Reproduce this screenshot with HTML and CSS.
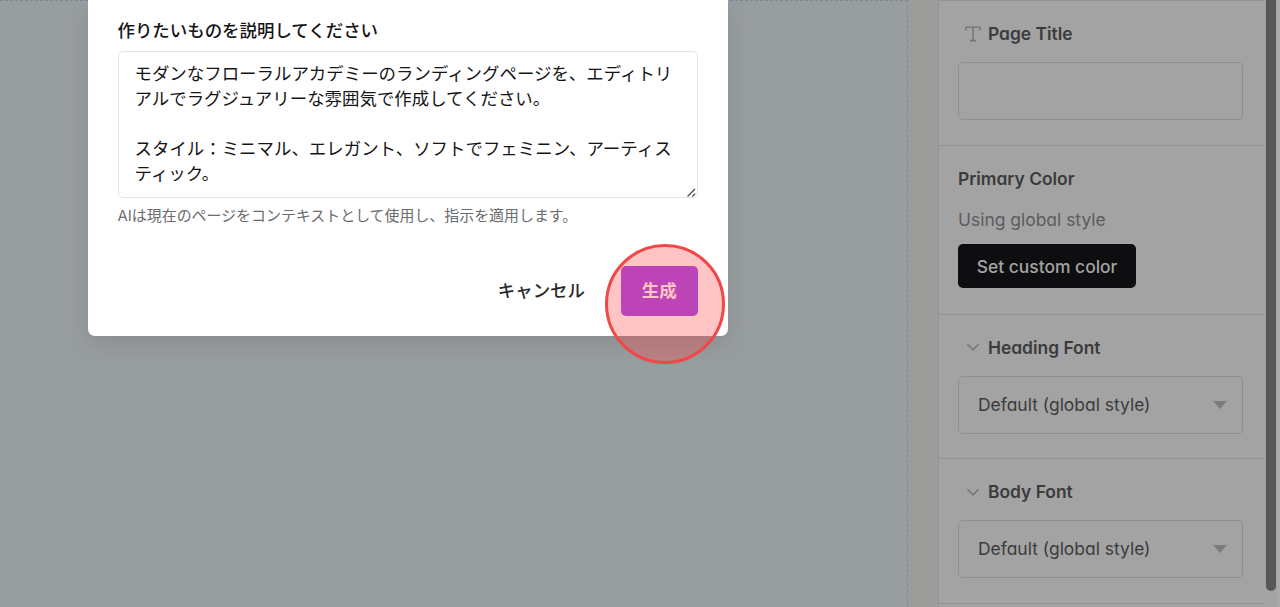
FILE: index.html
```html
<!DOCTYPE html>
<html lang="ja">
<head>
    <meta charset="UTF-8">
    <meta name="viewport" content="width=device-width, initial-scale=1.0">
    <title>Page Editor</title>
    <link rel="stylesheet" href="styles.css">
</head>
<body>
    <div class="editor">
        <main class="canvas"></main>
        <aside class="panel">
            <section class="section">
                <label class="section-title indented" for="pageTitle">
                    <svg class="icon-text" width="16" height="16" viewBox="0 0 16 16" fill="none" stroke="currentColor" stroke-width="1.6">
                        <path d="M1 4.4V1.2h14v3.2M8 1.2v13.4M5 14.6h6"/>
                    </svg>
                    Page Title
                </label>
                <input class="field" type="text" id="pageTitle">
            </section>
            <section class="section section-color">
                <div class="section-title">Primary Color</div>
                <div class="hint">Using global style</div>
                <button class="button-dark" type="button">Set custom color</button>
            </section>
            <section class="section">
                <div class="section-title indented">
                    <svg class="icon-chevron" width="16" height="16" viewBox="0 0 16 16" fill="none" stroke="currentColor" stroke-width="1.6">
                        <path d="M2.4 5.2L8 10.8l5.6-5.6"/>
                    </svg>
                    Heading Font
                </div>
                <div class="field select">Default (global style)<span class="caret"></span></div>
            </section>
            <section class="section">
                <div class="section-title indented">
                    <svg class="icon-chevron" width="16" height="16" viewBox="0 0 16 16" fill="none" stroke="currentColor" stroke-width="1.6">
                        <path d="M2.4 5.2L8 10.8l5.6-5.6"/>
                    </svg>
                    Body Font
                </div>
                <div class="field select">Default (global style)<span class="caret"></span></div>
            </section>
            <div class="panel-end"></div>
        </aside>
        <div class="scrollbar"><div class="thumb"></div></div>
    </div>

    <div class="dialog">
        <label class="label" for="prompt">作りたいものを説明してください</label>
        <div class="prompt-wrap">
            <textarea class="prompt" id="prompt">モダンなフローラルアカデミーのランディングページを、エディトリアルでラグジュアリーな雰囲気で作成してください。

スタイル：ミニマル、エレガント、ソフトでフェミニン、アーティスティック。</textarea>
            <svg class="grip" width="9" height="9" viewBox="0 0 9 9" stroke="#444" stroke-width="1.2">
                <path d="M0.5 8.5l7.5-7.5M5.3 8.5l2.9-2.9"/>
            </svg>
        </div>
        <p class="help">AIは現在のページをコンテキストとして使用し、指示を適用します。</p>
        <div class="actions">
            <button class="button" type="button">キャンセル</button>
            <button class="button button-primary" type="button">生成</button>
        </div>
    </div>
    <div class="click-marker"></div>
</body>
</html>
```

FILE: styles.css
```css
* {
    box-sizing: border-box;
}
body {
    margin: 0;
    height: 607px;
    overflow: hidden;
    background-color: #9c9c9b;
    font-family: Inter, "Noto Sans CJK JP", sans-serif;
    font-size: 17.44px;
    color: #3b3b3d;
}
.editor {
    display: flex;
    height: 607px;
    overflow: hidden;
}
.canvas {
    width: 908px;
    margin-right: 29.5px;
    background-color: #989da0;
    border-top: 1px dashed #7c8694;
    border-right: 1px dashed #8189a0;
}
.panel {
    width: 326.5px;
    background-color: #a3a3a3;
    border-left: 1px solid #959595;
    font-feature-settings: "cv11";
}
.section {
    height: 144.5px;
    padding: 19.5px 21px 0 19.5px;
    border-top: 1px solid #939393;
}
.section-color {
    height: 169px;
}
.panel-end {
    border-top: 1px solid #939393;
}
.section-title {
    display: flex;
    align-items: center;
    height: 26px;
    font-size: 17.4px;
    font-weight: 600;
}
.indented {
    padding-left: 7px;
    gap: 7px;
}
.icon-text, .icon-chevron {
    color: #777;
}
.field {
    display: block;
    width: 285px;
    height: 58px;
    margin-top: 15.5px;
    padding: 0 19px;
    background-color: transparent;
    border: 1px solid #8f8f8f;
    border-radius: 5px;
}
.select {
    display: flex;
    align-items: center;
    justify-content: space-between;
    padding-bottom: 1px;
}
.caret {
    margin-right: -4px;
    margin-top: 1px;
    border: 7.5px solid transparent;
    border-top: 8px solid #7b7b7b;
    border-bottom: 0;
}
.hint {
    margin-top: 16px;
    line-height: 26px;
    color: #5c5c60;
}
.button-dark {
    display: block;
    width: 178px;
    height: 44px;
    margin-top: 11px;
    padding: 0;
    border: none;
    border-radius: 5px;
    background-color: #0e0e10;
    color: #a3a3a3;
    font: inherit;
    font-weight: 500;
}
.scrollbar {
    width: 16px;
    padding-left: 2px;
    background-color: #a3a3a3;
    border-right: 3px solid #a9a9a9;
}
.thumb {
    width: 10px;
    height: 591px;
    background-color: #575757;
    border-radius: 0 0 5px 5px;
}
.dialog {
    position: absolute;
    top: 0;
    left: 87.5px;
    width: 640px;
    height: 335.5px;
    padding: 18px 30px 0;
    background-color: #fff;
    border-radius: 0 0 7px 7px;
    box-shadow: 0 8px 24px rgba(0,0,0,0.1);
}
.label {
    display: block;
    height: 33px;
    line-height: 26px;
    font-weight: 500;
    color: #151517;
}
.prompt-wrap {
    position: relative;
    height: 147px;
}
.prompt {
    display: block;
    width: 580px;
    height: 147px;
    padding: 9px 15.5px 9px 16px;
    border: 1px solid #e4e4e7;
    border-radius: 5px;
    resize: none;
    overflow: hidden;
    outline: none;
    font: inherit;
    line-height: 25px;
    color: #151517;
}
.grip {
    position: absolute;
    right: 2px;
    bottom: 1px;
}
.help {
    margin: 6px 0 0;
    font-size: 14.95px;
    line-height: 24px;
    color: #6b6b70;
}
.actions {
    display: flex;
    justify-content: flex-end;
    gap: 16px;
    margin-top: 37.5px;
}
.button {
    height: 50px;
    padding: 0 20px 2px;
    border: none;
    border-radius: 5px;
    background-color: transparent;
    font: inherit;
    font-weight: 500;
    color: #29292b;
}
.button-primary {
    width: 76.5px;
    background-color: #9c43ea;
    color: #fff;
    font-weight: 600;
}
.click-marker {
    position: absolute;
    top: 244px;
    left: 605px;
    width: 120px;
    height: 120px;
    border: 3px solid #f04848;
    border-radius: 50%;
    background-color: rgba(255,70,70,0.32);
}
```
